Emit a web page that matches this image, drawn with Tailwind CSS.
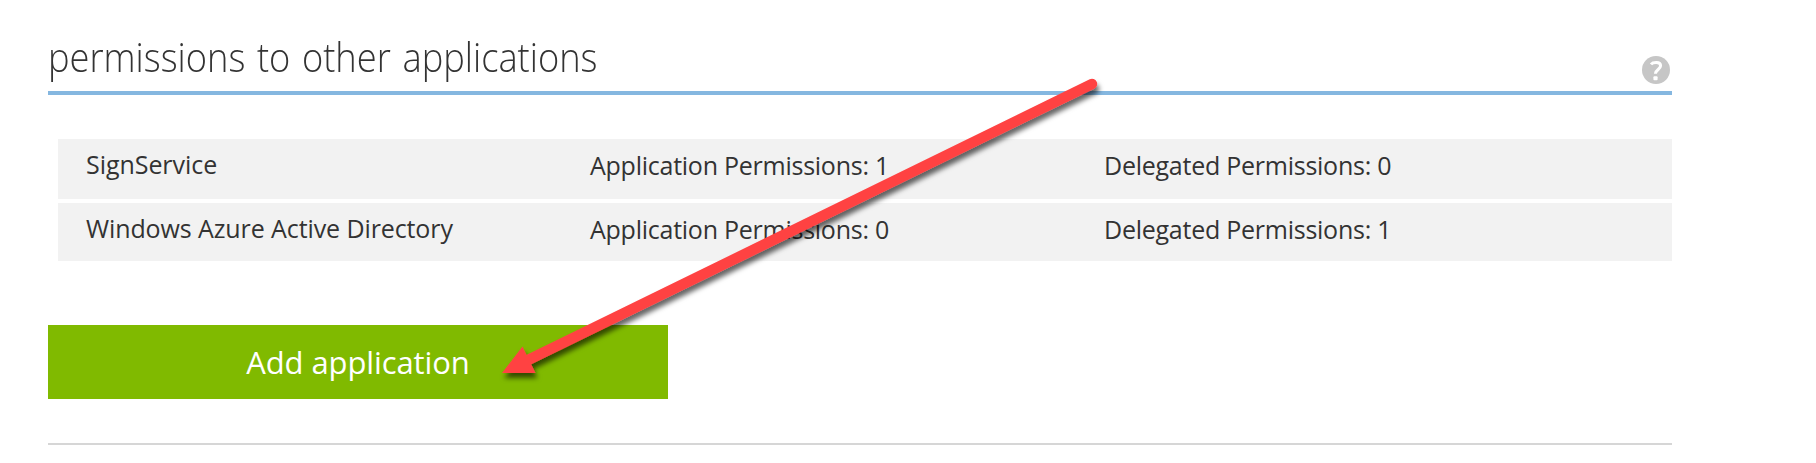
<!DOCTYPE html>
<html lang="en">
<head>
<meta charset="utf-8">
<title>Permissions to other applications</title>
<script src="https://cdn.jsdelivr.net/npm/@tailwindcss/browser@4"></script>
</head>
<body class="relative h-[463px] overflow-hidden bg-white pl-12 pr-36 font-['Open_Sans',sans-serif] text-[#333]">
  <header class="flex h-[95px] items-start justify-between border-b-4 border-[#85b7e0] pt-7">
    <h1 class="mt-[1.5px] origin-left scale-x-[0.906] whitespace-nowrap text-[40px] leading-[54px] font-light [word-spacing:2.5px]">permissions to other applications</h1>
    <svg class="mt-7 mr-0.5 size-7" viewBox="0 0 28 28" fill="none">
      <circle cx="14" cy="14" r="14" fill="#c6c6c6"/>
      <path d="M9 8.4C10.8 6.2 18.6 5.2 18.6 9.8C18.6 13.4 13.4 13.6 13.4 17.8" stroke="#fff" stroke-width="3"/>
      <rect x="11.4" y="20.2" width="4.2" height="4" rx="1" fill="#fff"/>
    </svg>
  </header>

  <main>
    <ul class="mt-11 ml-2.5 flex flex-col gap-1 text-[25px] leading-[34px] whitespace-nowrap">
      <li class="flex h-15 items-start bg-[#f2f2f2] pt-2 pl-7">
        <span class="w-[504px] tracking-[-0.05px]">SignService</span>
        <span class="w-[514px] pt-px tracking-[-0.25px]">Application Permissions: 1</span>
        <span class="pt-px tracking-[-0.25px]">Delegated Permissions: 0</span>
      </li>
      <li class="flex h-[58px] items-start bg-[#f2f2f2] pt-2 pl-7">
        <span class="w-[504px] tracking-[-0.1px]">Windows Azure Active Directory</span>
        <span class="w-[514px] pt-px tracking-[-0.25px]">Application Permissions: 0</span>
        <span class="pt-px tracking-[-0.25px]">Delegated Permissions: 1</span>
      </li>
    </ul>
    <button class="mt-16 flex h-[74px] w-[620px] items-start justify-center bg-[#80ba00] pt-4 text-[31px] leading-[42px] tracking-[-0.1px] text-white">Add application</button>
    <hr class="mt-11 border-t-2 border-[#d6d6d6]">
  </main>

  <svg class="pointer-events-none absolute top-0 left-0 h-[463px] w-[1816px]" viewBox="0 0 1816 463">
    <defs>
      <filter id="shadow" filterUnits="userSpaceOnUse" x="480" y="60" width="640" height="340">
        <feDropShadow dx="2" dy="5" stdDeviation="2.8" flood-color="#000" flood-opacity="0.6"/>
      </filter>
    </defs>
    <g filter="url(#shadow)" fill="#ff4343">
      <path d="M1092 84L526 361" stroke="#ff4343" stroke-width="10.4" stroke-linecap="round"/>
      <path d="M502 373L522.5 346.5L535.5 373Z"/>
    </g>
  </svg>
</body>
</html>
